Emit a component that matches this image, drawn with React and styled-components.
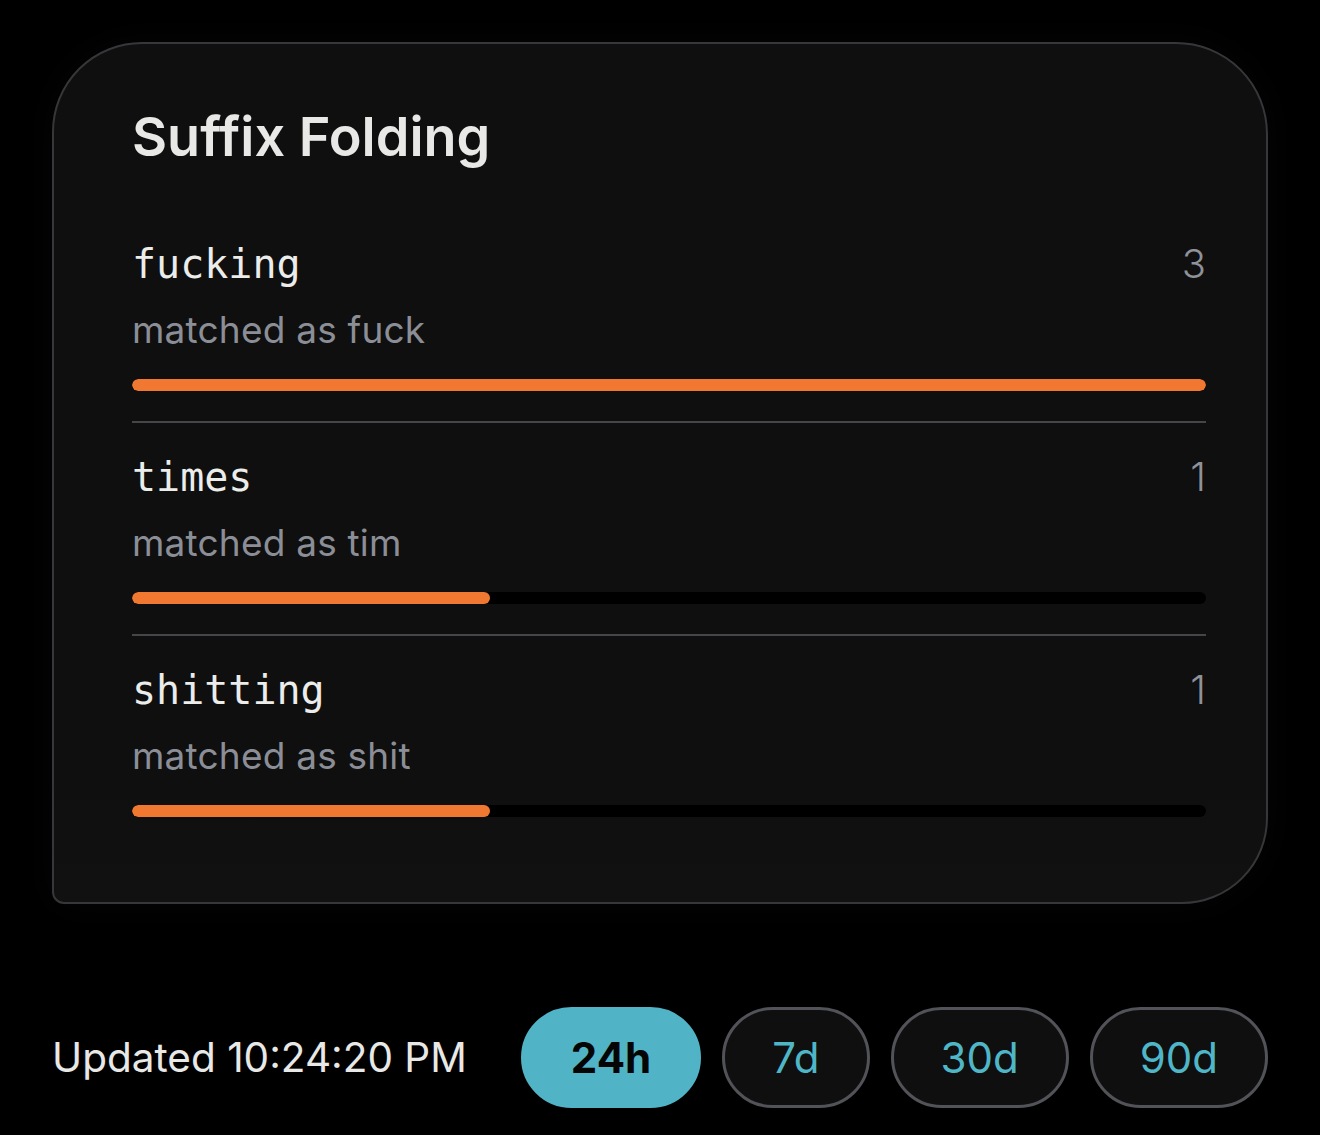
// Package dependencies
import React from 'react';
import styled, {createGlobalStyle} from 'styled-components';


// Component for the suffix folding card with its range switcher
export default function App() {
  const max = Math.max(...foldList.map(unit => unit.count));

  const rows = foldList.map(unit => {
    return (
      <Row key={unit.id}>
        <RowHead>
          <Word>{unit.word}</Word>
          <Count>{unit.count}</Count>
        </RowHead>
        <Matched>matched as {unit.stem}</Matched>
        <Track>
          <Fill style={{width: `${(unit.count / max) * 100}%`}}/>
        </Track>
      </Row>
    )
  })

  const ranges = rangeList.map(unit => {
    return (
      <RangeButton key={unit.id} $active={unit.active}>
        {unit.title}
      </RangeButton>
    )
  })

  return (
    <Page>
      <GlobalStyle/>
      <Card>
        <Title>Suffix Folding</Title>
        <List>
          {rows}
        </List>
      </Card>
      <Footer>
        <Updated>Updated 10:24:20 PM</Updated>
        <Ranges>
          {ranges}
        </Ranges>
      </Footer>
    </Page>
)}


// Constant Arrays
const foldList = [
  {id: 1, word: 'fucking', stem: 'fuck', count: 3},
  {id: 2, word: 'times', stem: 'tim', count: 1},
  {id: 3, word: 'shitting', stem: 'shit', count: 1}
];

const rangeList = [
  {id: 1, title: '24h', active: true},
  {id: 2, title: '7d', active: false},
  {id: 3, title: '30d', active: false},
  {id: 4, title: '90d', active: false}
];


// Styling
const GlobalStyle = createGlobalStyle`
  html, body {
    margin: 0;
    padding: 0;
    background-color: #000;
  }

  body {
    font-family: Inter, "Noto Sans", sans-serif;
  }
`

const Page = styled.main`
  display: flex;
  flex-direction: column;
  gap: 103px;
  padding: 42px 52px;
  min-height: 1135px;
  box-sizing: border-box;
  background-color: #000;
`

const Card = styled.section`
  display: flex;
  flex-direction: column;
  gap: 41px;
  padding: 60px 60px 55px 78px;
  border: 2px solid #36373a;
  border-radius: 90px 92px 86px 12px;
  background: linear-gradient(180deg, #0f0f0f 0%, #0f0f0f 85%, #111 100%);
  box-shadow: 0 0 40px rgba(255, 255, 255, 0.025);
`

const Title = styled.h1`
  margin: 0;
  font-size: 54px;
  line-height: 65px;
  font-weight: 600;
  color: #e8e8e6;
`

const List = styled.div`
  display: flex;
  flex-direction: column;
`

const Row = styled.div`
  display: flex;
  flex-direction: column;
  padding: 30px 0;
  border-bottom: 2px solid #45464a;

  &:last-child {
    border-bottom: none;
  }
`

const RowHead = styled.div`
  display: flex;
  justify-content: space-between;
  align-items: baseline;
`

const Word = styled.span`
  font-family: "DejaVu Sans Mono", "Liberation Mono", monospace;
  font-size: 40px;
  line-height: 48px;
  color: #ececea;
`

const Count = styled.span`
  font-size: 40px;
  line-height: 48px;
  font-weight: 300;
  color: #8f9299;
`

const Matched = styled.div`
  margin-top: 20px;
  font-size: 37px;
  line-height: 44px;
  letter-spacing: 0.2px;
  color: #8b8e96;
`

const Track = styled.div`
  margin-top: 27px;
  height: 12px;
  border-radius: 6px;
  background-color: #000;
  overflow: hidden;
`

const Fill = styled.div`
  height: 100%;
  border-radius: 6px;
  background-color: #f07830;
`

const Footer = styled.footer`
  display: flex;
  justify-content: space-between;
  align-items: center;
`

const Updated = styled.span`
  font-size: 40.5px;
  color: #e8e8e6;
`

const Ranges = styled.div`
  display: flex;
  gap: 21px;
`

const RangeButton = styled.button`
  height: 101px;
  padding: 0 47px;
  border: 3px solid ${props => props.$active ? '#50b3c6' : '#525358'};
  border-radius: 51px;
  background-color: ${props => props.$active ? '#50b3c6' : '#0f0f0f'};
  font-family: Inter, "Noto Sans", sans-serif;
  font-size: 42px;
  font-weight: ${props => props.$active ? 700 : 400};
  color: ${props => props.$active ? '#050505' : '#4fb6c8'};
  cursor: pointer;
`
